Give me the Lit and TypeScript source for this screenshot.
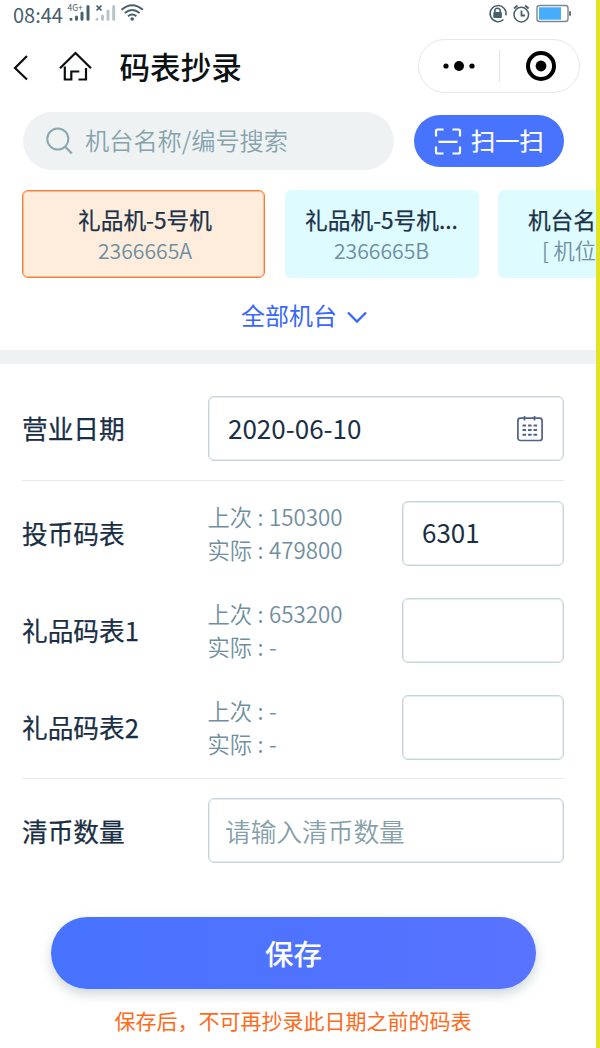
import { LitElement, html, css, svg, nothing } from "lit";
import { customElement, property } from "lit/decorators.js";

interface Machine {
  name: string;
  code: string;
  active?: boolean;
  partial?: boolean;
}

interface Meter {
  label: string;
  last: string;
  actual: string;
  value: string;
}

const MACHINES: Machine[] = [
  { name: "礼品机-5号机", code: "2366665A", active: true },
  { name: "礼品机-5号机...", code: "2366665B" },
  { name: "机台名", code: "[ 机位", partial: true },
];

const METERS: Meter[] = [
  { label: "投币码表", last: "150300", actual: "479800", value: "6301" },
  { label: "礼品码表1", last: "653200", actual: "-", value: "" },
  { label: "礼品码表2", last: "-", actual: "-", value: "" },
];

@customElement("status-bar")
class StatusBar extends LitElement {
  static styles = css`
    :host {
      display: flex;
      justify-content: space-between;
      height: 28px;
      box-sizing: border-box;
      padding: 0 22px 0 13px;
      color: #47606a;
    }
    .left {
      display: flex;
    }
    .time {
      width: 54px;
      font-size: 20px;
      line-height: 29px;
      white-space: nowrap;
    }
    svg {
      display: block;
    }
    text {
      font-family: "Noto Sans CJK SC", sans-serif;
    }
  `;

  render() {
    return html`
      <div class="left">
        <div class="time">08:44</div>
        <svg width="80" height="28" viewBox="67 0 80 28">
          <text x="67.5" y="10.5" font-size="8.5" fill="#47606a">4G+</text>
          <g stroke="#47606a" stroke-width="3" stroke-linecap="round">
            <path d="M71 19.2v.1M76.5 17v2.3M82 13v6.3M88 6.5v12.8" />
          </g>
          <path d="M96.500 5.500l5 5m0-5l-5 5" stroke="#47606a" stroke-width="1.700" />
          <g stroke="#b6c5c7" stroke-width="3" stroke-linecap="round">
            <path d="M97 19.200v.1M102.500 16v3.300M108 11v8.300M113.700 6.500v12.800" />
          </g>
          <g fill="none" stroke="#47606a" stroke-width="1.900">
            <path d="M121.500 9.700q10.700-9 21.400 0M124.800 13q7.400-6 14.800 0M128 16.300q4.200-3.400 8.400 0" />
          </g>
          <circle cx="132.200" cy="19" r="1.800" fill="#47606a" />
        </svg>
      </div>
      <svg width="87" height="28" viewBox="487 0 87 28">
        <g fill="none" stroke="#47606a" stroke-width="1.500">
          <path d="M503.500 19.500a8 8 0 1 1 2.400-4.200" />
          <path d="M494.800 12.500v-1.500a2.700 2.700 0 0 1 5.400 0v1.500" stroke-width="1.600" />
          <circle cx="521.300" cy="14.600" r="7.300" />
          <path d="M514 8.500l3.500-3M528.600 8.500l-3.500-3" stroke-width="1.800" />
          <path d="M521.500 10.500v5h3.500" stroke-width="1.800" />
        </g>
        <rect x="493.300" y="12" width="8.600" height="6" rx="1" fill="#47606a" />
        <rect x="537" y="5.500" width="31" height="16" rx="2.500" fill="#fff" stroke="#7b898f" stroke-width="1.400" />
        <rect x="539" y="7.300" width="22" height="12.400" fill="#46adfc" />
        <rect x="569" y="11.300" width="2" height="4.400" fill="#68777d" />
      </svg>
    `;
  }
}

@customElement("nav-bar")
class NavBar extends LitElement {
  static styles = css`
    :host {
      display: flex;
      align-items: center;
      height: 84px;
      box-sizing: border-box;
      padding: 0 16px 8px 12px;
    }
    svg {
      display: block;
    }
    .nav-icons {
      margin-top: 1px;
    }
    .title {
      flex: 1;
      margin: 0 0 0 25.500px;
      font-size: 30.6px;
      line-height: 40px;
      font-weight: 500;
      color: #0c1114;
      white-space: nowrap;
    }
    .capsule {
      display: flex;
      align-items: center;
      width: 162px;
      height: 54px;
      box-sizing: border-box;
      border: 1px solid #e3e8e8;
      border-radius: 27px;
    }
    .half {
      display: flex;
      justify-content: center;
      width: 80px;
      box-sizing: border-box;
    }
    .half.close {
      width: 79px;
      padding-left: 3px;
    }
    .rule {
      width: 1px;
      height: 32px;
      background: #e0e6e6;
    }
  `;

  render() {
    return html`
      <svg class="nav-icons" width="82" height="40" viewBox="12 47 82 40">
        <g fill="none" stroke="#0c0f10" stroke-width="2.200">
          <path d="M27 56L15 68l12 11.500" />
          <path d="M60 68.200L75.500 53 91 68.200" />
          <path d="M64.800 66.500V79.500h6.500V71.500h8M78.500 79.500h7.500V68" />
        </g>
      </svg>
      <h1 class="title">码表抄录</h1>
      <div class="capsule">
        <div class="half">
          <svg width="34" height="12" viewBox="0 0 34 12">
            <circle cx="4" cy="6" r="2.600" />
            <circle cx="17" cy="6" r="5" />
            <circle cx="30" cy="6" r="2.600" />
          </svg>
        </div>
        <div class="rule"></div>
        <div class="half close">
          <svg width="32" height="32" viewBox="0 0 32 32">
            <circle cx="16" cy="16" r="13" fill="none" stroke="#000" stroke-width="4" />
            <circle cx="16" cy="16" r="5.400" />
          </svg>
        </div>
      </div>
    `;
  }
}

@customElement("machine-card")
class MachineCard extends LitElement {
  @property() name = "";
  @property() code = "";

  static styles = css`
    :host {
      flex: none;
      display: flex;
      flex-direction: column;
      align-items: center;
      width: 194px;
      height: 88px;
      box-sizing: border-box;
      padding-top: 15px;
      border-radius: 6px;
      background: #defbff;
      white-space: nowrap;
    }
    :host([active]) {
      width: 243px;
      padding: 14px 0 0 3px;
      border: 1px solid #fb7a30;
      box-shadow: inset 0 0 0 1px rgba(251, 122, 48, 0.4);
      background: #feeddc;
    }
    :host([partial]) {
      width: 98px;
      align-items: flex-end;
      border-radius: 6px 0 0 6px;
    }
    .name {
      font-size: 22.7px;
      line-height: 30px;
      font-weight: 400;
      -webkit-text-stroke: 0.25px currentColor;
      color: #1c3248;
    }
    .code {
      font-size: 21.200px;
      line-height: 30px;
      font-weight: 350;
      color: #6f8fa0;
    }
  `;

  render() {
    return html`
      <div class="name">${this.name}</div>
      <div class="code">${this.code}</div>
    `;
  }
}

@customElement("value-box")
class ValueBox extends LitElement {
  @property() value = "";
  @property() placeholder = "";
  @property({ type: Boolean }) calendar = false;

  static styles = css`
    :host {
      display: flex;
      align-items: center;
      justify-content: space-between;
      height: 65px;
      box-sizing: border-box;
      padding: 0 19px 2px 19px;
      border: 1px solid #c6d5d7;
      box-shadow: inset 0 0 0 1px rgba(198, 213, 215, 0.45);
      border-radius: 6px;
      font-size: 26px;
      line-height: 38px;
      color: #1a2f45;
      white-space: nowrap;
    }
    .hint {
      margin-left: -3px;
      padding-top: 2px;
      font-size: 25.700px;
      font-weight: 350;
      color: #869fa8;
    }
    svg {
      display: block;
      margin-top: 2px;
    }
  `;

  render() {
    const dots = [9.5, 14, 18.7].flatMap((y) =>
      [6.5, 12, 17.5].map((x) => svg`<rect x=${x} y=${y} width="3.6" height="2" rx=".5" />`),
    );
    return html`
      <span class=${this.value ? "value" : "hint"}>${this.value || this.placeholder}</span>
      ${this.calendar
        ? html`<svg width="28" height="28" viewBox="0 0 28 28" fill="#4f628a">
            <rect x="1.900" y="3.200" width="24.200" height="22.300" rx="2.500" fill="none" stroke="#4f628a" stroke-width="1.700" />
            <path d="M8.500 1v4.500M18.500 1v4.500" stroke="#4f628a" stroke-width="1.700" />
            ${dots}
          </svg>`
        : nothing}
    `;
  }
}

@customElement("app-root")
class AppRoot extends LitElement {
  static styles = css`
    :host {
      display: block;
      width: 600px;
      height: 1048px;
      box-sizing: border-box;
      border-right: 4px solid #e1e323;
      overflow: hidden;
      background: #fff;
      font-family: "Noto Sans CJK SC", sans-serif;
    }
    svg {
      display: block;
    }
    .search-row {
      display: flex;
      align-items: center;
      gap: 20px;
      padding-left: 23px;
    }
    .search {
      display: flex;
      align-items: center;
      width: 371px;
      height: 58px;
      box-sizing: border-box;
      padding-left: 22px;
      gap: 10px;
      border-radius: 29px;
      background: #eef2f3;
      font-size: 24.2px;
      line-height: 36px;
      font-weight: 350;
      color: #86a3ac;
      white-space: nowrap;
    }
    .search span {
      margin-bottom: 3px;
    }
    .scan {
      display: flex;
      align-items: center;
      width: 150px;
      height: 52px;
      box-sizing: border-box;
      padding-left: 20px;
      gap: 9px;
      border-radius: 26px;
      background: #4773fd;
      font-size: 24.2px;
      line-height: 36px;
      font-weight: 400;
      -webkit-text-stroke: 0.25px currentColor;
      color: #fff;
      white-space: nowrap;
    }
    .scan span {
      margin-bottom: 2px;
    }
    .cards {
      display: flex;
      gap: 19.500px;
      margin-top: 19.500px;
      padding-left: 22px;
    }
    .all {
      display: flex;
      align-items: center;
      justify-content: center;
      gap: 10px;
      height: 72.500px;
      padding: 0 0 0 12px;
      box-sizing: border-box;
      font-size: 24px;
      line-height: 36px;
      color: #3767fb;
    }
    .all span {
      margin-top: 3px;
    }
    .all svg {
      margin-top: 7px;
    }
    .band {
      height: 14px;
      background: #eef2f3;
    }
    .form {
      padding: 0 32px 0 22px;
    }
    .section {
      display: grid;
      gap: 32px;
      padding: 19px 0;
      border-bottom: 1px solid #e4eaea;
    }
    .section.first {
      padding-top: 32px;
    }
    .section.last {
      border-bottom: 0;
    }
    .row {
      display: grid;
      grid-template-columns: 186px 1fr;
      align-items: center;
      height: 65px;
    }
    .row.meter {
      grid-template-columns: 185.500px 1fr 162px;
    }
    .label {
      font-size: 25.700px;
      line-height: 38px;
      font-weight: 400;
      -webkit-text-stroke: 0.25px currentColor;
      color: #1a2f45;
    }
    .first .label {
      padding-bottom: 2px;
    }
    .stats {
      padding-bottom: 1px;
      font-size: 22.300px;
      line-height: 32.500px;
      font-weight: 350;
      word-spacing: 0.500px;
      color: #6f8fa0;
      white-space: nowrap;
    }
    .save {
      display: flex;
      align-items: center;
      justify-content: center;
      width: 485px;
      height: 72px;
      margin: 35px 0 0 51px;
      border-radius: 36px;
      background: linear-gradient(90deg, #4773ff, #5873ff);
      box-shadow: 0 5px 12px rgba(60, 90, 100, 0.25);
      font-size: 28.500px;
      font-weight: 500;
      line-height: 42px;
      color: #fff;
    }
    .notice {
      margin: 15px 0 0;
      padding-right: 10px;
      text-align: center;
      font-size: 21px;
      line-height: 32px;
      color: #fd6a1a;
    }
  `;

  render() {
    return html`
      <status-bar></status-bar>
      <nav-bar></nav-bar>
      <div class="search-row">
        <div class="search">
          <svg width="30" height="30" viewBox="0 0 30 30" fill="none" stroke="#8aa8b1" stroke-width="2">
            <circle cx="12.800" cy="13" r="10.500" />
            <path d="M20 20.500l6.800 7" stroke-width="2.400" />
          </svg>
          <span>机台名称/编号搜索</span>
        </div>
        <div class="scan">
          <svg width="28" height="27" viewBox="-.5 0 28 27" fill="none" stroke="#fff" stroke-width="2.200">
            <path d="M1.500 8.500V3q0-1.500 1.500-1.500H9M18 1.500h6q1.500 0 1.500 1.500v5.500M25.500 18.500V24q0 1.500-1.500 1.500h-6M9 25.500H3q-1.500 0-1.500-1.500v-5.500M4 13.800h19" />
          </svg>
          <span>扫一扫</span>
        </div>
      </div>
      <div class="cards">
        ${MACHINES.map(
          (m) => html`<machine-card
            name=${m.name}
            code=${m.code}
            ?active=${m.active}
            ?partial=${m.partial}
          ></machine-card>`,
        )}
      </div>
      <div class="all">
        <span>全部机台</span>
        <svg width="20" height="13" viewBox="0 0 20 13" fill="none" stroke="#3767fb" stroke-width="2.300">
          <path d="M1 1.500l9 9 9-9" />
        </svg>
      </div>
      <div class="band"></div>
      <div class="form">
        <div class="section first">
          <div class="row">
            <div class="label">营业日期</div>
            <value-box value="2020-06-10" calendar></value-box>
          </div>
        </div>
        <div class="section">
          ${METERS.map(
            (m) => html`
              <div class="row meter">
                <div class="label">${m.label}</div>
                <div class="stats">
                  <div>上次 : ${m.last}</div>
                  <div>实际 : ${m.actual}</div>
                </div>
                <value-box value=${m.value}></value-box>
              </div>
            `,
          )}
        </div>
        <div class="section last">
          <div class="row">
            <div class="label">清币数量</div>
            <value-box placeholder="请输入清币数量"></value-box>
          </div>
        </div>
      </div>
      <div class="save">保存</div>
      <p class="notice">保存后，不可再抄录此日期之前的码表</p>
    `;
  }
}
